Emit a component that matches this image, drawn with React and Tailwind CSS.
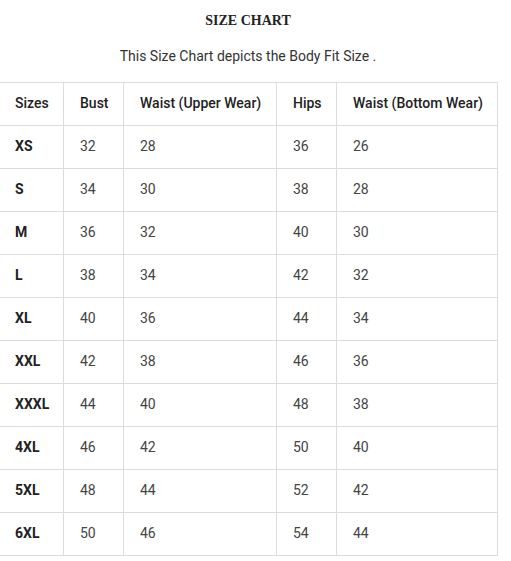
import React from "react";

const rows = [
  ["XS", "32", "28", "36", "26"],
  ["S", "34", "30", "38", "28"],
  ["M", "36", "32", "40", "30"],
  ["L", "38", "34", "42", "32"],
  ["XL", "40", "36", "44", "34"],
  ["XXL", "42", "38", "46", "36"],
  ["XXXL", "44", "40", "48", "38"],
  ["4XL", "46", "42", "50", "40"],
  ["5XL", "48", "44", "52", "42"],
  ["6XL", "50", "46", "54", "44"],
];

const headers = ["Sizes", "Bust", "Waist (Upper Wear)", "Hips", "Waist (Bottom Wear)"];

export default function App() {
  return (
    <div className="w-[511px] h-[561px] bg-white overflow-hidden">
      <div className="w-[498px] ml-[-1px]">
        <div
          className="pt-[11px] text-center text-[14px] leading-[20px] font-bold text-[#222]"
          style={{ fontFamily: '"Liberation Serif", serif' }}
        >
          SIZE CHART
        </div>
        <div
          className="mt-[15px] text-center text-[14px] leading-[20px] text-[#333]"
          style={{ fontFamily: "Roboto, sans-serif" }}
        >
          This Size Chart depicts the Body Fit Size .
        </div>
        <table
          className="mt-[16px] w-[498px] table-fixed border-collapse text-[14px]"
          style={{ fontFamily: "Roboto, sans-serif" }}
        >
          <colgroup>
            <col className="w-[64px]" />
            <col className="w-[60px]" />
            <col className="w-[153px]" />
            <col className="w-[60px]" />
            <col className="w-[161px]" />
          </colgroup>
          <thead>
            <tr className="h-[43px]">
              {headers.map((h, i) => (
                <th
                  key={h}
                  className={
                    i === 0
                      ? "border border-[#dcdcdc] pl-[15px] pb-[1px] text-left font-medium text-[#222] whitespace-nowrap"
                      : "border border-[#dcdcdc] pl-[16px] pb-[1px] text-left font-medium text-[#222] whitespace-nowrap"
                  }
                >
                  {h}
                </th>
              ))}
            </tr>
          </thead>
          <tbody>
            {rows.map((r) => (
              <tr key={r[0]} className="h-[43px]">
                {r.map((c, i) => (
                  <td
                    key={i}
                    className={
                      i === 0
                        ? "border border-[#dcdcdc] pl-[15px] pb-[1px] font-bold text-[#222]"
                        : "border border-[#dcdcdc] pl-[16px] pb-[1px] text-[#444]"
                    }
                  >
                    {c}
                  </td>
                ))}
              </tr>
            ))}
          </tbody>
        </table>
      </div>
    </div>
  );
}
